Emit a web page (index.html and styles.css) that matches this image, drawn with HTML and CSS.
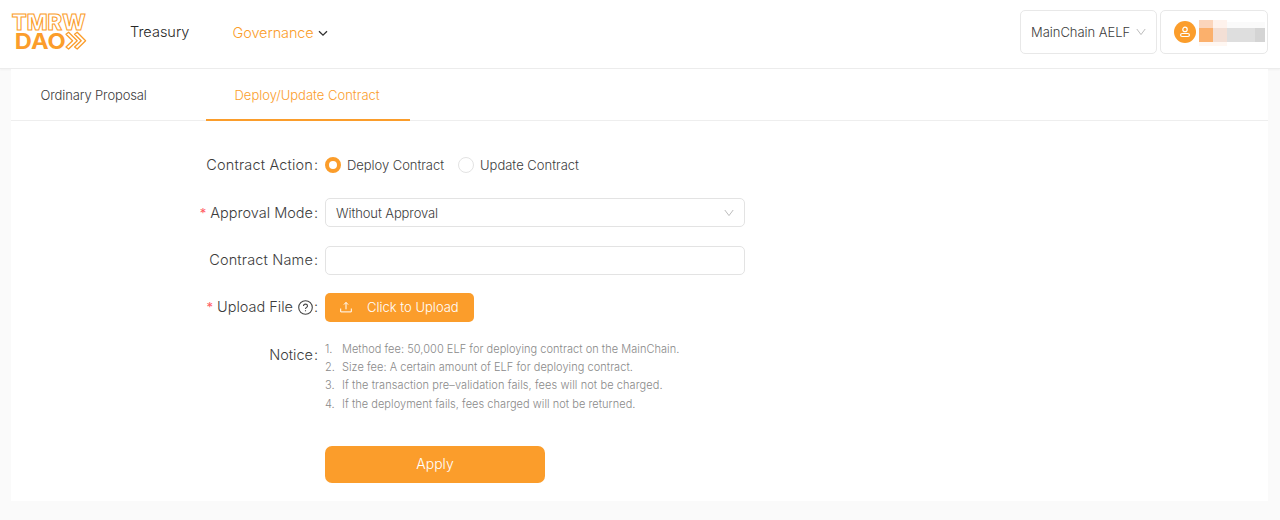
FILE: index.html
```html
<!DOCTYPE html>
<html lang="en">
<head>
<meta charset="utf-8">
<title>TMRW DAO</title>
<link rel="stylesheet" href="styles.css">
</head>
<body>
<header class="header">
  <svg class="logo" width="80" height="58" viewBox="0 0 80 58">
    <text class="logo-outline" x="0.8" y="26.9" textLength="73.8" lengthAdjust="spacingAndGlyphs">TMRW</text>
    <text class="logo-solid" x="3.8" y="46" textLength="51" lengthAdjust="spacingAndGlyphs">DAO</text>
    <path class="logo-arrow" d="M55 31.2 57.6 29.2 66.2 37.7 57.6 46 55 44 61.6 37.7Z"/>
    <path class="logo-arrow" d="M63.6 31.2 66.2 29.2 74.6 37.7 66.2 46 63.6 44 70.2 37.7Z"/>
  </svg>
  <nav class="nav">
    <a class="nav-item treasury">Treasury</a>
    <a class="nav-item governance active">Governance</a>
    <svg class="nav-arrow" width="10" height="7" viewBox="0 0 10 7"><path d="M1 1.2 5 5.2 9 1.2"/></svg>
  </nav>
  <div class="chain"><span class="chain-name">MainChain AELF</span><svg class="chevron" width="10" height="8" viewBox="0 0 10 8"><path d="M.8 1 5 6.6 9.2 1"/></svg></div>
  <div class="account">
    <svg class="avatar" width="22" height="22" viewBox="0 0 22 22"><circle class="avatar-bg" cx="11" cy="11" r="11"/><circle class="avatar-line" cx="11" cy="8.4" r="2.2"/><rect class="avatar-line" x="6.6" y="12.5" width="8.8" height="3" rx="1.5"/></svg>
    <svg class="mosaic" width="66" height="28" viewBox="0 0 66 28">
      <path fill="#fbd5bb" d="M0 2h14v8H0z"/><path fill="#fef2ec" d="M14 2h14v8H14z"/><path fill="#fafafa" d="M28 4h38v6H28z"/>
      <path fill="#fbb06c" d="M0 10h14v14H0z"/><path fill="#f3dfd5" d="M14 10h14v14H14z"/><path fill="#dedede" d="M28 10h28v14H28z"/><path fill="#d4d4d4" d="M56 10h10v14H56z"/><path fill="#fff7f2" d="M0 24h28v4H0z"/>
    </svg>
  </div>
</header>
<main class="panel">
  <div class="tabs">
    <div class="tab tab-ordinary"><span>Ordinary Proposal</span></div>
    <div class="tab tab-deploy active"><span>Deploy/Update Contract</span></div>
  </div>
  <form class="form">
    <div class="row action-row">
      <div class="label"><span class="l-action">Contract Action</span><i>:</i></div>
      <div class="radios">
        <span class="radio checked"></span><span class="r-deploy">Deploy Contract</span>
        <span class="radio"></span><span class="r-update">Update Contract</span>
      </div>
    </div>
    <div class="row">
      <div class="label"><b>*</b><span class="l-mode">Approval Mode</span><i>:</i></div>
      <div class="field"><span class="value">Without Approval</span><svg class="chevron" width="10" height="8" viewBox="0 0 10 8"><path d="M.8 1 5 6.6 9.2 1"/></svg></div>
    </div>
    <div class="row">
      <div class="label"><span class="l-name">Contract Name</span><i>:</i></div>
      <div class="field"></div>
    </div>
    <div class="row upload-row">
      <div class="label"><b>*</b><span class="l-file">Upload File</span>
        <svg class="help" width="15" height="15" viewBox="0 0 15 15"><circle cx="7.5" cy="7.5" r="6.8"/><path d="M5.5 6.1c0-1.2.8-2 2-2s2 .8 2 1.8c0 1.5-2 1.5-2 3.1M7.5 10.2v1.1"/></svg><i>:</i></div>
      <div class="upload"><svg class="upload-icon" width="12" height="12" viewBox="0 0 12 12"><path d="M.7 7.5v3.4h10.6V7.5M6 8.3V1.5M3.9 3.6 6 1.4l2.1 2.2"/></svg><span class="upload-text">Click to Upload</span></div>
    </div>
    <div class="row notice-row">
      <div class="label"><span class="l-notice">Notice</span><i>:</i></div>
      <div class="notice">
        <div><em>1.</em><span class="n1">Method fee: 50,000 ELF for deploying contract on the MainChain.</span></div>
        <div><em>2.</em><span class="n2">Size fee: A certain amount of ELF for deploying contract.</span></div>
        <div><em>3.</em><span class="n3">If the transaction pre–validation fails, fees will not be charged.</span></div>
        <div><em>4.</em><span class="n4">If the deployment fails, fees charged will not be returned.</span></div>
      </div>
    </div>
    <div class="apply"><span>Apply</span></div>
  </form>
</main>
</body>
</html>
```
FILE: styles.css
```css
* { box-sizing: border-box; }
body { margin: 0; height: 520px; overflow: hidden; background: #fafafa; color: #3c3c3c; font-family: Inter, "Liberation Sans", sans-serif; font-size: 13px; font-weight: 360; white-space: nowrap; }
.header { height: 69px; display: flex; align-items: flex-start; background: #fff; border-bottom: 1px solid #ececec; padding: 10px 12px 0 11px; box-shadow: 0 1px 2px rgba(0,0,0,.04); }
.logo { flex: none; margin-top: -7px; }
.logo text { font-family: Inter, sans-serif; font-weight: 700; }
.logo .logo-outline { font-size: 21.2px; font-weight: 800; fill: #fff; stroke: #fb9d2b; stroke-width: 1; }
.logo-solid { font-size: 21.8px; fill: #fb9d2b; }
.logo-arrow { fill: none; stroke: #fb9d2b; stroke-width: 1.3; stroke-linejoin: round; }
.nav { display: flex; margin-left: 39px; flex: 1; font-size: 14.5px; line-height: 22px; }
.nav-item { margin-top: 11px; color: #282828; }
.treasury { width: 102.5px; }
.governance { width: 85px; margin-top: 12px; letter-spacing: -.1px; }
.nav .active, .active { color: #fb9d2b; }
.nav-arrow { margin-top: 20px; fill: none; stroke: #303030; stroke-width: 1.3; }
.chain, .account { height: 44px; border: 1px solid #e8e8e8; border-radius: 5px; display: flex; align-items: center; }
.chain { width: 137px; padding: 0 10px; justify-content: space-between; margin-right: 3px; }
.chain-name { letter-spacing: -.03px; }
.account { width: 108px; padding-left: 13px; }
.chevron { fill: none; stroke: #bcbcbc; stroke-width: 1; }
.avatar-bg { fill: #fb9d2b; }
.avatar-line { fill: none; stroke: #fff; stroke-width: 1.2; }
.mosaic { margin-left: 3px; flex: none; }
.panel { margin: 0 12px 0 11px; height: 432px; background: #fff; }
.tabs { display: flex; height: 52px; border-bottom: 1px solid #eee; padding-left: 29.5px; line-height: 53px; }
.tab { height: 52px; }
.tab-ordinary { width: 165.5px; letter-spacing: -.13px; }
.tab-deploy { width: 204px; padding-left: 28.5px; border-bottom: 2px solid #fb9d2b; }
.form { padding-top: 29px; }
.row { display: flex; height: 29px; margin-bottom: 18.4px; align-items: center; }
.action-row { margin-bottom: 19.4px; }
.label { width: 307px; margin-right: 7px; display: flex; align-items: center; justify-content: flex-end; font-size: 14.5px; line-height: 22px; }
.l-action, .l-name { letter-spacing: .16px; }
.label i { font-style: normal; width: 4px; margin-left: 1px; }
.label b { color: #ff5c62; font-weight: 400; font-size: 13px; margin-right: 4px; }
.help { margin-left: 5px; fill: none; stroke: #454545; stroke-width: 1.1; }
.radios { display: flex; align-items: center; }
.radio { width: 16px; height: 16px; border: 1px solid #e3e3e3; border-radius: 50%; margin-right: 6px; }
.radio.checked { border: 4px solid #fb9d2b; }
.r-deploy { width: 111px; letter-spacing: -.05px; }
.field { width: 420px; height: 29px; border: 1px solid #e3e3e3; border-radius: 5px; display: flex; align-items: center; justify-content: space-between; padding: 0 10px; }
.value { letter-spacing: -.1px; }
.upload-row { height: 28px; }
.upload { width: 149px; height: 29px; margin-top: 1px; border-radius: 5px; background: #fb9d2b; color: #fff; display: flex; align-items: center; padding: 0 0 1px 15px; }
.upload-icon { fill: none; stroke: #fff; stroke-width: 1; margin-right: 15px; }
.notice-row { height: 73px; align-items: flex-start; margin-bottom: 33px; }
.notice-row .label { margin-top: 4px; }
.notice { font-size: 11px; line-height: 18.4px; color: #898989; letter-spacing: .04px; }
.notice div { display: flex; }
.notice em { font-style: normal; width: 17px; }
.n3 { letter-spacing: .09px; }
.apply { margin-left: 314px; width: 220px; height: 37px; border-radius: 7px; background: #fb9d2b; color: #fff; font-size: 14px; padding-bottom: 1px; display: flex; align-items: center; justify-content: center; }
```
